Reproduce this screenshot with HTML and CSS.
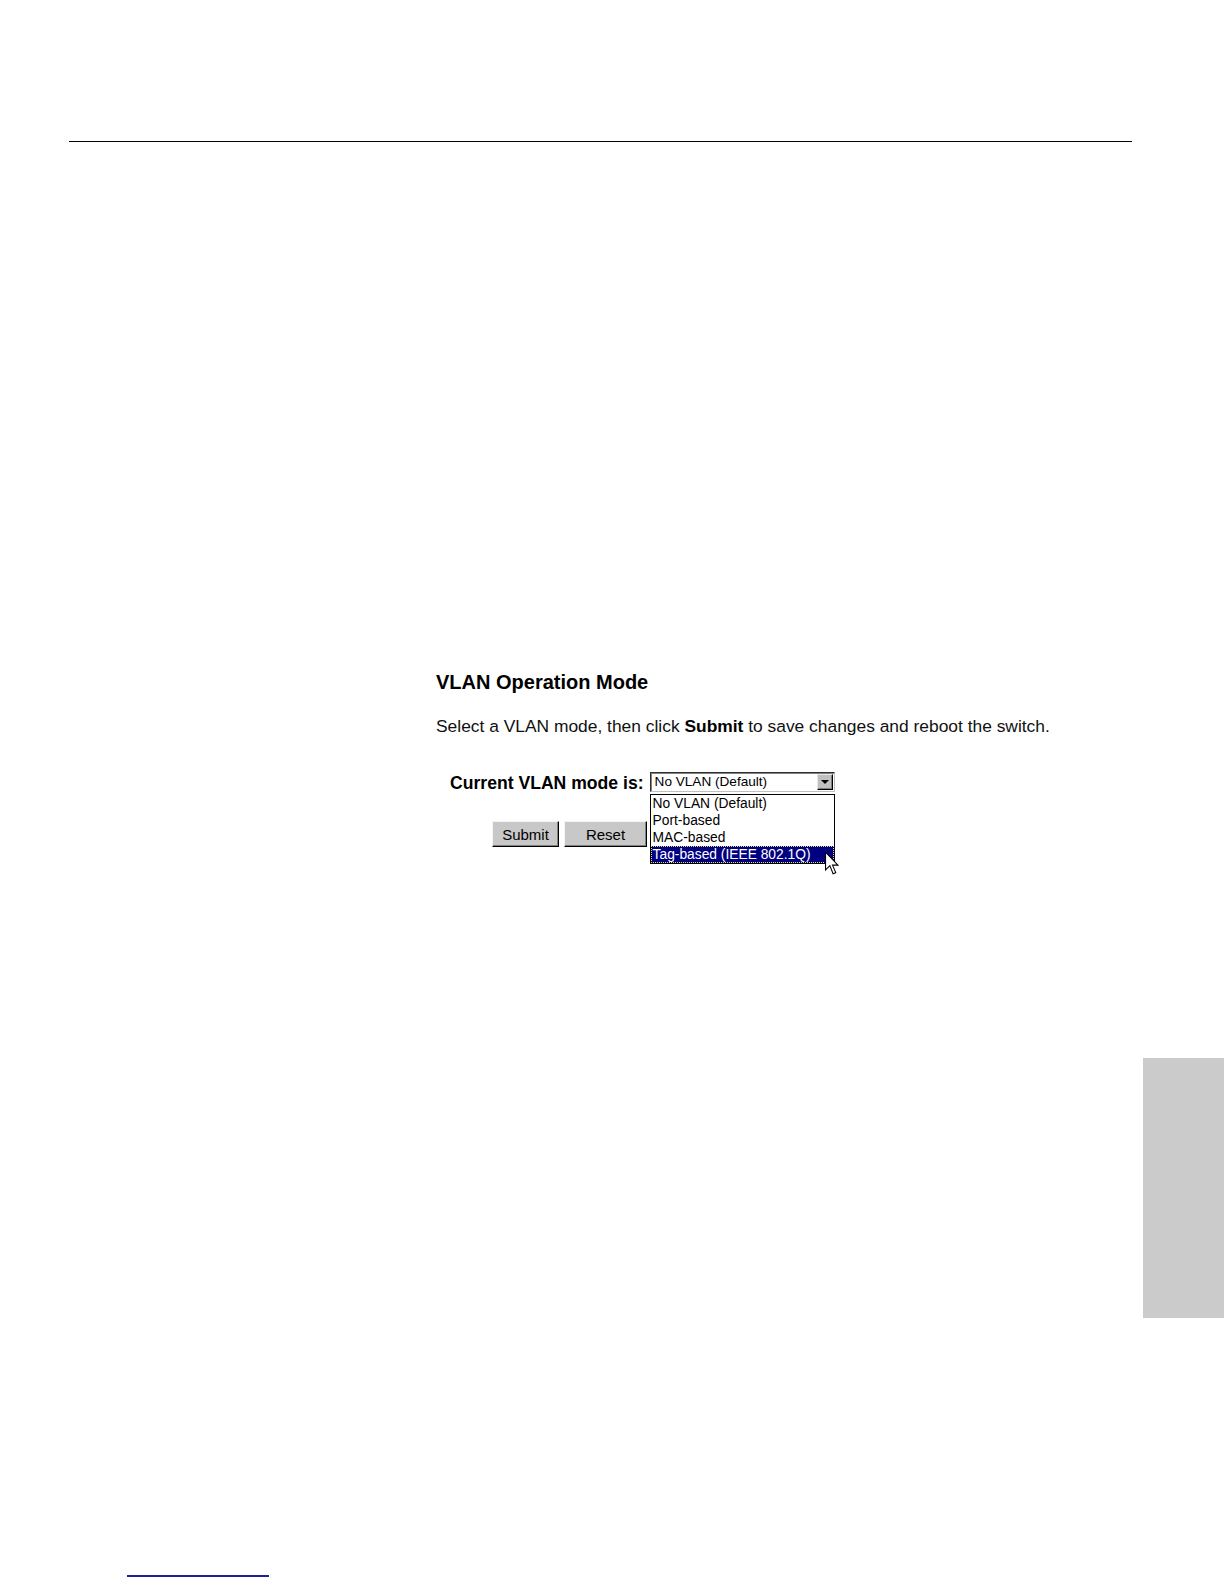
FILE: index.html
```html
<!DOCTYPE html>
<html>
<head>
<meta charset="utf-8">
<title>VLAN Operation Mode</title>
<link rel="stylesheet" href="styles.css">
</head>
<body>
<div class="page">
  <div class="rule"></div>
  <div class="content">
    <h2 class="title">VLAN Operation Mode</h2>
    <p class="intro">Select a VLAN mode, then click <b>Submit</b> to save changes and reboot the switch.</p>
    <div class="mode-row">
      <span class="label">Current VLAN mode is:</span>
      <div class="select-wrap">
        <div class="select">
          <span class="select-value">No VLAN (Default)</span>
          <span class="select-btn"><span class="tri"></span></span>
        </div>
        <ul class="options">
          <li class="option">No VLAN (Default)</li>
          <li class="option">Port-based</li>
          <li class="option">MAC-based</li>
          <li class="option selected"><span class="focus">Tag-based (IEEE 802.1Q)</span></li>
        </ul>
        <svg class="cursor" width="14" height="25" viewBox="0 0 13 22">
          <path d="M0.5 0.5 L0.5 17 L4.5 13 L7.5 20.5 L10 19.5 L7 12.5 L12 12.5 Z" fill="#fff" stroke="#000" stroke-width="1" stroke-linejoin="miter"/>
        </svg>
      </div>
    </div>
    <div class="buttons">
      <button class="btn btn-submit">Submit</button>
      <button class="btn btn-reset">Reset</button>
    </div>
  </div>
  <div class="tab"></div>
  <div class="footer-line"></div>
</div>
</body>
</html>
```
FILE: styles.css
```css
html, body {
  margin: 0;
  padding: 0;
  background: #fff;
}
body {
  font-family: "Liberation Sans", Arial, sans-serif;
  color: #000;
}
.page {
  padding-top: 141px;
  height: 1443px;
  overflow: hidden;
}
.rule {
  margin-left: 69px;
  width: 1063px;
  border-top: 1px solid #000;
}
.content {
  margin-left: 436px;
  margin-top: 528px;
}
.title {
  margin: 0;
  font-size: 20px;
  line-height: 24px;
  font-weight: bold;
}
.intro {
  margin: 22px 0 0;
  font-size: 17.4px;
  line-height: 20px;
  color: #111;
}
.intro b {
  color: #000;
}
.mode-row {
  display: flex;
  align-items: flex-start;
  gap: 6px;
  margin-top: 36px;
  margin-left: 14px;
}
.label {
  font-weight: bold;
  font-size: 17.6px;
  line-height: 20px;
  margin-top: 1px;
}
.select-wrap {
  position: relative;
  width: 185px;
  height: 20px;
}
.select {
  box-sizing: border-box;
  width: 185px;
  height: 20px;
  border: 1px solid #303030;
  border-right-color: #c0c0c0;
  border-bottom-color: #c0c0c0;
  box-shadow: inset 1px 1px 0 #808080;
  display: flex;
  align-items: center;
  justify-content: space-between;
  padding: 0 1px 0 4px;
  background: #fff;
}
.select-value {
  font-size: 13.6px;
  line-height: 16px;
}
.select-btn {
  box-sizing: border-box;
  width: 16px;
  height: 16px;
  background: #c0c0c0;
  border: 1px solid;
  border-color: #e8e8e8 #000 #000 #e8e8e8;
  box-shadow: inset -1px -1px 0 #808080;
  display: flex;
  align-items: center;
  justify-content: center;
}
.tri {
  width: 0;
  height: 0;
  border-left: 4px solid transparent;
  border-right: 4px solid transparent;
  border-top: 4px solid #000;
}
.options {
  position: absolute;
  left: 0;
  top: 22px;
  width: 185px;
  box-sizing: border-box;
  margin: 0;
  padding: 0;
  list-style: none;
  border: 1px solid #000;
  background: #fff;
}
.option {
  height: 17px;
  font-size: 13.8px;
  line-height: 17px;
  padding-left: 2px;
  white-space: nowrap;
}
.option.selected {
  background: #000080;
  color: #fff;
  padding-left: 0;
}
.focus {
  display: block;
  height: 15px;
  line-height: 15px;
  padding-left: 1px;
  border: 1px dotted #e0e060;
}
.cursor {
  position: absolute;
  left: 175px;
  top: 79px;
}
.buttons {
  display: flex;
  gap: 5px;
  margin-top: 28px;
  margin-left: 56px;
}
.btn {
  box-sizing: border-box;
  height: 26px;
  padding: 0;
  font-family: "Liberation Sans", Arial, sans-serif;
  font-size: 15px;
  color: #000;
  background: #c8c8c8;
  border: 1px solid;
  border-color: #f4f4f4 #000 #000 #f4f4f4;
  box-shadow: inset -1px -1px 0 #808080;
}
.btn-submit {
  width: 67px;
}
.btn-reset {
  width: 83px;
}
.tab {
  margin-top: 211px;
  margin-left: 1143px;
  width: 81px;
  height: 260px;
  background: #cbcbcb;
}
.footer-line {
  margin-top: 257px;
  margin-left: 127px;
  width: 142px;
  height: 2px;
  background: #1f1f8f;
}
```
